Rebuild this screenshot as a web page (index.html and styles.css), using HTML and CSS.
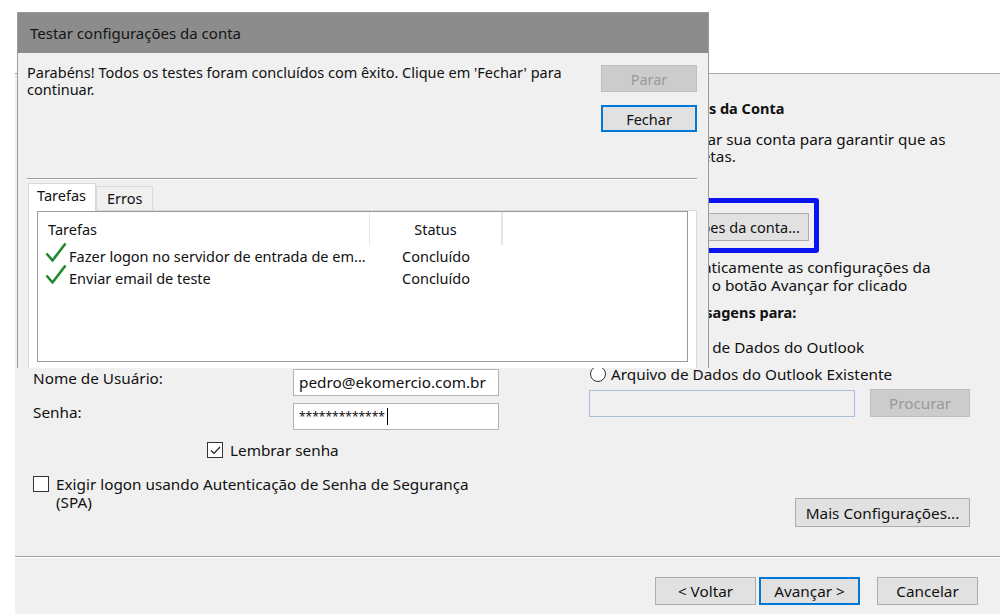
FILE: index.html
```html
<!DOCTYPE html>
<html lang="pt-BR">
<head>
    <meta charset="UTF-8">
    <title>Configurações da Conta</title>
    <link rel="stylesheet" href="styles.css">
</head>
<body>
    <div class="window">
        <div class="window-top"></div>
        <div class="panel">
            <div class="settings">
                <div class="left-col">
                    <div class="field-row">
                        <label>Nome de Usuário:</label>
                        <div class="textbox">pedro@ekomercio.com.br</div>
                    </div>
                    <div class="field-row">
                        <label>Senha:</label>
                        <div class="textbox password">*************<span class="caret"></span></div>
                    </div>
                    <div class="check-row remember">
                        <span class="checkbox checked">
                            <svg width="13" height="13" viewBox="0 0 13 13"><path d="M2 6.5 L5 9.5 L11 3" fill="none" stroke="#222" stroke-width="1.2"/></svg>
                        </span>
                        <span>Lembrar senha</span>
                    </div>
                    <div class="check-row spa">
                        <span class="checkbox"></span>
                        <span class="spa-text">Exigir logon usando Autenticação de Senha de Segurança (SPA)</span>
                    </div>
                </div>

                <div class="right-col">
                    <h3 class="section-title">Testar Configurações da Conta</h3>
                    <p class="section-text">É recomendável testar sua conta para garantir que as<br>entradas estão corretas.</p>
                    <div class="highlight">
                        <button class="btn">Testar Configurações da conta...</button>
                    </div>
                    <div class="check-row auto-test">
                        <span class="checkbox checked">
                            <svg width="13" height="13" viewBox="0 0 13 13"><path d="M2 6.5 L5 9.5 L11 3" fill="none" stroke="#222" stroke-width="1.2"/></svg>
                        </span>
                        <span>Testar automaticamente as configurações da<br>conta quando o botão Avançar for clicado</span>
                    </div>
                    <div class="section-label">Entregar novas mensagens para:</div>
                    <div class="radio-row first">
                        <span class="radio selected"></span>
                        <span>Novo Arquivo de Dados do Outlook</span>
                    </div>
                    <div class="radio-row">
                        <span class="radio"></span>
                        <span>Arquivo de Dados do Outlook Existente</span>
                    </div>
                    <div class="browse-row">
                        <div class="textbox disabled"></div>
                        <button class="btn disabled">Procurar</button>
                    </div>
                    <div class="more-row">
                        <button class="btn more">Mais Configurações...</button>
                    </div>
                </div>
            </div>

            <div class="footer">
                <button class="btn nav">&lt; Voltar</button>
                <button class="btn nav default">Avançar &gt;</button>
                <button class="btn nav cancel">Cancelar</button>
            </div>
        </div>
    </div>

    <div class="dialog">
        <div class="dialog-title">Testar configurações da conta</div>
        <div class="dialog-body">
            <div class="dialog-top">
                <p class="dialog-message">Parabéns! Todos os testes foram concluídos com êxito. Clique em 'Fechar' para continuar.</p>
                <div class="dialog-buttons">
                    <button class="btn disabled">Parar</button>
                    <button class="btn default">Fechar</button>
                </div>
            </div>
            <div class="separator"></div>
            <div class="tabs">
                <div class="tab active">Tarefas</div>
                <div class="tab">Erros</div>
            </div>
            <div class="tab-page">
                <div class="list">
                    <div class="list-header">
                        <div class="col task">Tarefas</div>
                        <div class="col status">Status</div>
                        <div class="col rest"></div>
                    </div>
                    <div class="list-row">
                        <div class="col task">
                            <svg class="tick" width="22" height="21" viewBox="0 0 22 21"><path d="M1.5 11.5 L7.5 18.5 L20.5 1.5" fill="none" stroke="#1f8a2c" stroke-width="2.6" stroke-linejoin="round"/></svg>
                            <span>Fazer logon no servidor de entrada de em...</span>
                        </div>
                        <div class="col status">Concluído</div>
                    </div>
                    <div class="list-row">
                        <div class="col task">
                            <svg class="tick" width="22" height="21" viewBox="0 0 22 21"><path d="M1.5 11.5 L7.5 18.5 L20.5 1.5" fill="none" stroke="#1f8a2c" stroke-width="2.6" stroke-linejoin="round"/></svg>
                            <span>Enviar email de teste</span>
                        </div>
                        <div class="col status">Concluído</div>
                    </div>
                </div>
            </div>
        </div>
    </div>
</body>
</html>
```

FILE: styles.css
```css
* {
    margin: 0;
    padding: 0;
    box-sizing: border-box;
}
body {
    width: 1000px;
    height: 616px;
    overflow: hidden;
    position: relative;
    background-color: #ffffff;
    color: #111111;
    font-family: "Noto Sans", "Open Sans", sans-serif;
    font-size: 14.5px;
}
button {
    font-family: inherit;
    font-size: inherit;
    color: #111111;
}

/* janela de fundo */
.window {
    font-size: 15.3px;
}
.window-top {
    height: 73px;
}
.panel {
    margin-left: 15px;
    height: 541px;
    background-color: #f0f0f0;
    border-top: 1px solid #a9a9a9;
}
.settings {
    height: 482px;
    display: grid;
    grid-template-columns: 545px 1fr;
}
.btn {
    height: 28px;
    background-color: #e1e1e1;
    border: 1px solid #adadad;
}
.btn.default {
    border: 2px solid #0078d7;
}
.btn.disabled {
    background-color: #cccccc;
    border-color: #bfbfbf;
    color: #9a9a9a;
}
.textbox {
    height: 27px;
    background-color: #ffffff;
    border: 1px solid #b3b3b3;
    padding: 2px 5px;
    line-height: 20px;
}
.checkbox {
    width: 16px;
    height: 16px;
    border: 1px solid #333333;
    background-color: #ffffff;
    display: flex;
    align-items: center;
    justify-content: center;
    flex-shrink: 0;
}
.radio {
    width: 16px;
    height: 16px;
    border: 1px solid #333333;
    border-radius: 50%;
    background-color: #ffffff;
    flex-shrink: 0;
}

/* coluna esquerda */
.left-col {
    padding: 295px 0 0 18px;
}
.field-row {
    display: flex;
    margin-bottom: 7px;
}
.field-row label {
    width: 260px;
    line-height: 18px;
}
.field-row .textbox {
    width: 206px;
}
.password {
    font-size: 12px;
    display: flex;
    align-items: center;
}
.caret {
    width: 1px;
    height: 17px;
    margin-left: 2px;
    background-color: #000000;
}
.check-row {
    display: flex;
    align-items: flex-start;
    gap: 7px;
    line-height: 18px;
}
.check-row .checkbox {
    margin-top: 1px;
}
.remember {
    margin: 11px 0 0 174px;
}
.spa {
    margin-top: 16px;
}
.spa-text {
    width: 425px;
}

/* coluna direita */
.right-col {
    padding: 25px 31px 0 0;
    display: flex;
    flex-direction: column;
}
.section-title {
    margin-left: 4px;
    font-size: 14.5px;
    line-height: 18px;
    font-weight: bold;
}
.section-text {
    margin: 14px 0 0 2px;
    line-height: 17px;
}
.highlight {
    align-self: flex-start;
    margin-top: 33px;
    padding: 10px 5px 7px 10px;
    border: 5px solid #0a14f0;
    border-radius: 3px;
}
.highlight .btn {
    font-size: 14.5px;
    padding: 0 8px 0 6px;
    height: 28px;
}
.auto-test {
    margin: 5px 0 0 25px;
}
.section-label {
    margin-top: 9px;
    font-size: 14.5px;
    font-weight: bold;
    line-height: 18px;
}
.radio-row {
    display: flex;
    align-items: center;
    gap: 5px;
    margin-left: 30px;
    line-height: 18px;
    margin-top: 9px;
}
.radio-row.first {
    margin-top: 17px;
}
.radio.selected {
    background: radial-gradient(circle, #333333 0 3px, #ffffff 4px);
}
.browse-row {
    display: flex;
    align-items: center;
    gap: 15px;
    margin: 6px 0 0 29px;
}
.browse-row .textbox {
    width: 266px;
    height: 27px;
    background-color: #f0f0f0;
    border-color: #a9c0da;
}
.browse-row .btn {
    width: 100px;
}
.more-row {
    display: flex;
    justify-content: flex-end;
    margin-top: 81px;
}
.btn.more {
    width: 175px;
    height: 29px;
}

/* rodape */
.footer {
    border-top: 1px solid #a0a0a0;
    box-shadow: inset 0 1px 0 #ffffff;
    display: flex;
    justify-content: flex-end;
    padding: 20px 22px 0 0;
}
.btn.nav {
    width: 101px;
    margin-left: 3px;
}
.btn.nav.cancel {
    margin-left: 17px;
}

/* dialogo por cima */
.dialog {
    position: absolute;
    left: 17px;
    top: 12px;
    width: 692px;
    height: 356px;
    overflow: hidden;
    background-color: #f0f0f0;
    border: 1px solid #9a9a9a;
    border-bottom: none;
}
.dialog-title {
    height: 40px;
    background-color: #8c8c8c;
    padding-left: 12px;
    line-height: 40px;
    font-size: 15px;
    color: #151515;
}
.dialog-top {
    height: 125px;
    display: flex;
    padding: 11px 11px 0 9px;
}
.dialog-message {
    flex: 1;
    line-height: 17px;
    padding-right: 30px;
}
.dialog-buttons {
    width: 96px;
    display: flex;
    flex-direction: column;
    gap: 13px;
    padding-top: 1px;
}
.dialog-buttons .btn {
    height: 27px;
}
.separator {
    margin: 0 11px 0 9px;
    border-top: 1px solid #a0a0a0;
    border-bottom: 1px solid #ffffff;
}
.tabs {
    display: flex;
    margin: 3px 0 0 10px;
    align-items: flex-end;
    height: 27px;
}
.tab {
    height: 24px;
    padding: 0 10px;
    line-height: 22px;
    background-color: #f0f0f0;
    border: 1px solid #d9d9d9;
    border-bottom: none;
}
.tab.active {
    height: 28px;
    padding: 0 9px 0 8px;
    line-height: 22px;
    background-color: #ffffff;
    position: relative;
    top: 1px;
}
.tab-page {
    margin: 0 11px 0 10px;
    height: 170px;
    background-color: #ffffff;
    border: 1px solid #d9d9d9;
    padding: 0 8px;
}
.list {
    height: 151px;
    border: 1px solid #9a9a9a;
    background-color: #ffffff;
}
.list-header {
    display: flex;
    height: 33px;
    align-items: stretch;
}
.list-header .col {
    display: flex;
    align-items: center;
    border-right: 1px solid #e5e5e5;
}
.col.task {
    width: 332px;
    padding-left: 10px;
}
.col.status {
    width: 132px;
    justify-content: center;
    text-align: center;
}
.list-header .col.rest {
    width: 1px;
}
.list-row {
    display: flex;
    height: 22px;
    align-items: center;
}
.list-row .col.task {
    display: flex;
    align-items: center;
    padding-left: 7px;
    gap: 2px;
}
.tick {
    margin-top: -8px;
}
```
